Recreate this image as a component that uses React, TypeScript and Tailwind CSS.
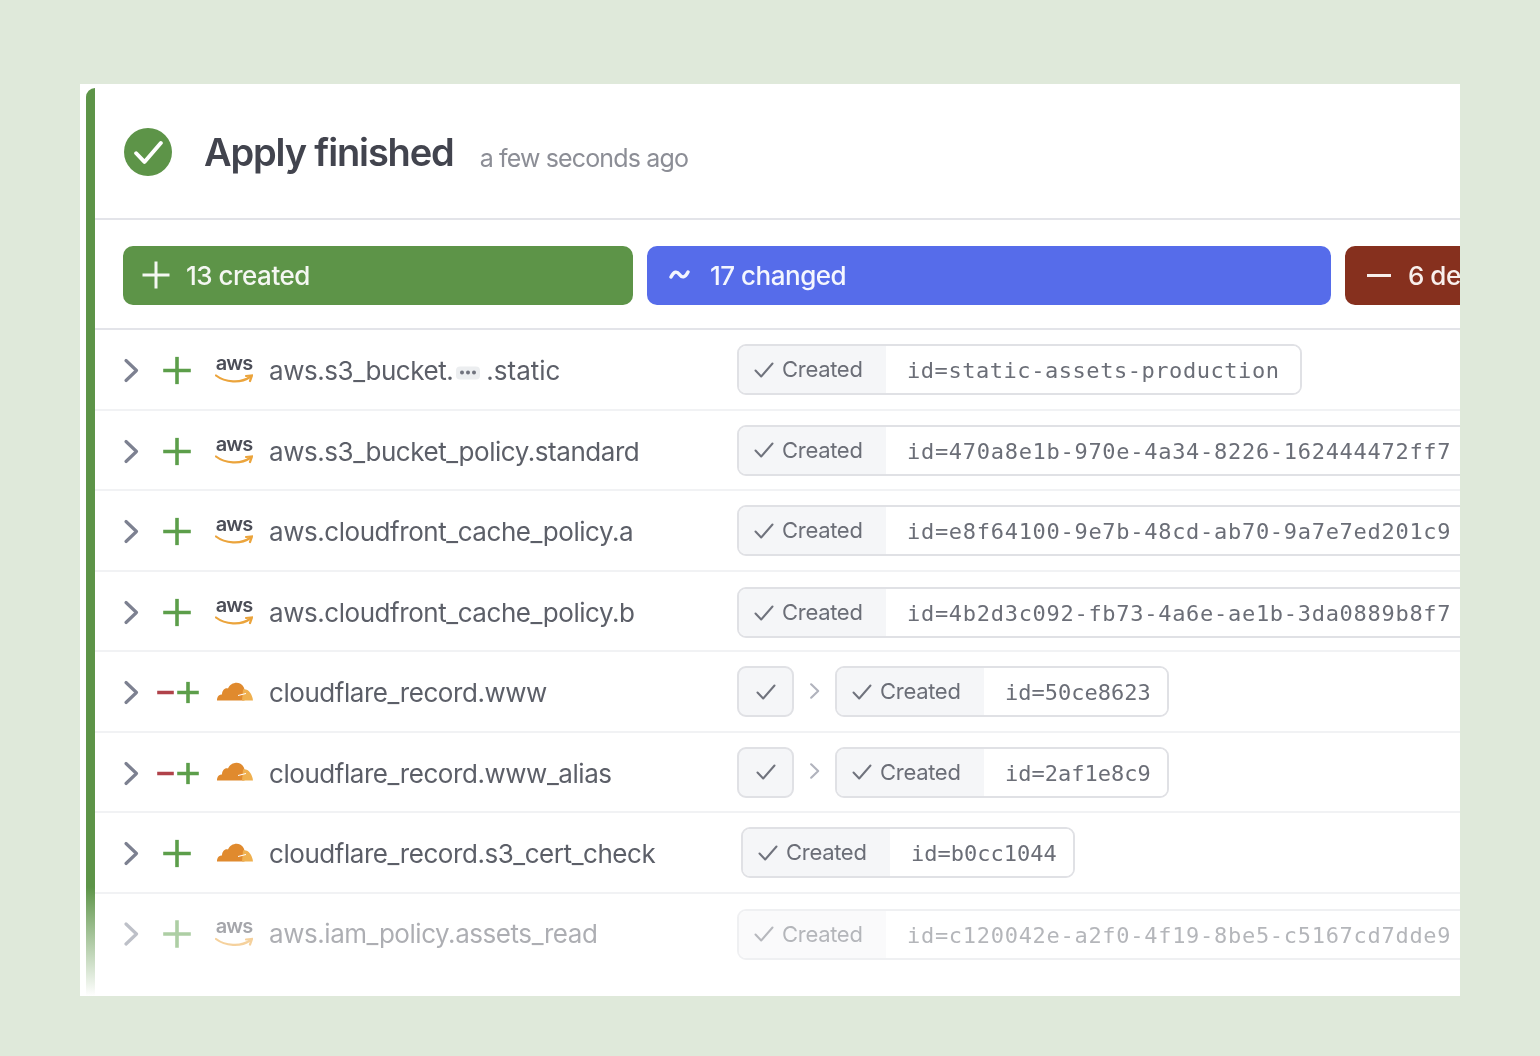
const uiFont = { fontFamily: "Inter, sans-serif" };

function Chevron({ className = "" }: { className?: string }) {
  return (
    <svg width="16" height="24" viewBox="0 0 16 24" fill="none" stroke="#7d8191" strokeWidth="3.2" strokeLinecap="round" strokeLinejoin="round" className={className}>
      <path d="M3 2 L13.5 12 L3 22" />
    </svg>
  );
}

function Plus() {
  return (
    <svg width="28" height="28" viewBox="0 0 28 28" stroke="#5c9e4a" strokeWidth="3.6" strokeLinecap="square">
      <path d="M14 2 V26 M2 14 H26" />
    </svg>
  );
}

function MinusPlus() {
  return (
    <svg width="42" height="22" viewBox="0 0 42 22" strokeWidth="3.6" strokeLinecap="square">
      <path d="M2 11 H15" stroke="#b0424a" />
      <path d="M31 2 V20 M22 11 H40" stroke="#5c9e4a" />
    </svg>
  );
}

function Check({ size = 20, color = "#70737d", weight = 2 }: { size?: number; color?: string; weight?: number }) {
  return (
    <svg width={size} height={size} viewBox="0 0 20 20" fill="none" stroke={color} strokeWidth={weight} strokeLinecap="round" strokeLinejoin="round">
      <path d="M1.5 10.5 L7.2 16.5 L18.5 3.5" />
    </svg>
  );
}

function AwsLogo() {
  return (
    <div className="flex h-[32px] w-[38px] -translate-x-[1px] flex-col items-center">
      <span className="-translate-y-[2px] text-[20px] leading-[20px] font-semibold tracking-[-1px] text-[#4c4e58]" style={uiFont}>
        aws
      </span>
      <svg width="38" height="11" viewBox="0 0 38 11" fill="none" stroke="#eba43c" strokeWidth="2.2" strokeLinecap="round" className="-mt-[1px]">
        <path d="M1 2 C10 9 26 10 35 3.5" />
        <path d="M31 2.5 L37 2 L35 7.5" />
      </svg>
    </div>
  );
}

function CloudflareLogo() {
  return (
    <svg width="38" height="22" viewBox="0 0 38 22" className="mb-[3px]">
      <path d="M1 20 C1 16 3 14 6 14 C6 10 9 7 12 8 C14 3 20 1 24 3 C26 4 28 6 28.5 9 L28.5 20 Z" fill="#e08a2e" />
      <path d="M27 9 C32 8 36 13 37 20 L26 20 Z" fill="#efb04f" />
      <path d="M22 15 L30 13" stroke="#fff" strokeWidth="1" />
    </svg>
  );
}

function Moved() {
  return (
    <>
      <div className="flex h-[51px] w-[57px] flex-none items-center justify-center rounded-[9px] border-2 border-[#e0e1e5] bg-[#f5f6f8]">
        <Check />
      </div>
      <Chevron className="mx-[15px] h-[16px] w-[11px] flex-none -translate-y-[1px] opacity-60" />
    </>
  );
}

type Row = {
  name: React.ReactNode;
  id: string;
  op?: "add" | "replace";
  logo: "aws" | "cf";
  moved?: boolean;
  boxClass?: string;
  idClass: string;
};

const rows: Row[] = [
  {
    name: (
      <>
        aws.s3_bucket.
        <span className="mr-[6px] ml-[3px] inline-flex h-[13px] w-[24px] translate-y-[-5px] items-center justify-center gap-[2px] rounded-[4px] bg-[#eceef0]">
          <i className="size-[4px] rounded-full bg-[#70737d]" />
          <i className="size-[4px] rounded-full bg-[#70737d]" />
          <i className="size-[4px] rounded-full bg-[#70737d]" />
        </span>
        <span className="tracking-[0px]">.static</span>
      </>
    ),
    id: "id=static-assets-production",
    logo: "aws",
    idClass: "pr-[21px] tracking-[0.55px]",
  },
  { name: "aws.s3_bucket_policy.standard", id: "id=470a8e1b-970e-4a34-8226-162444472ff7", logo: "aws", idClass: "pr-[20px] tracking-[0.71px]" },
  { name: "aws.cloudfront_cache_policy.a", id: "id=e8f64100-9e7b-48cd-ab70-9a7e7ed201c9", logo: "aws", idClass: "pr-[20px] tracking-[0.71px]" },
  { name: "aws.cloudfront_cache_policy.b", id: "id=4b2d3c092-fb73-4a6e-ae1b-3da0889b8f7", logo: "aws", boxClass: "mt-[4px]", idClass: "pr-[20px] tracking-[0.71px]" },
  { name: "cloudflare_record.www", id: "id=50ce8623", logo: "cf", op: "replace", moved: true, idClass: "pr-[16px] tracking-[0px]" },
  { name: "cloudflare_record.www_alias", id: "id=2af1e8c9", logo: "cf", op: "replace", moved: true, idClass: "pr-[16px] tracking-[0px]" },
  { name: "cloudflare_record.s3_cert_check", id: "id=b0cc1044", logo: "cf", boxClass: "mt-[1px] ml-[4px]", idClass: "pr-[16px] tracking-[0px]" },
];

function ResultRow({ row, last }: { row: Row; last?: boolean }) {
  return (
    <div className={last ? "flex h-[104px] items-start pt-[14px] opacity-50" : "flex h-[80.5px] flex-none items-center border-b-2 border-[#f1f2f4]"}>
      <div className={last ? "flex h-[52px] w-[642px] flex-none items-center pl-[28px]" : "flex w-[642px] flex-none translate-y-[1.5px] items-center pl-[28px]"}>
        <Chevron />
        <div className={row.op === "replace" ? "ml-[18px] flex w-[59px] flex-none items-center" : "ml-[24px] flex w-[53px] flex-none items-center"}>
          {row.op === "replace" ? <MinusPlus /> : <Plus />}
        </div>
        <div className="flex w-[53px] flex-none items-center">
          {row.logo === "aws" ? <AwsLogo /> : <CloudflareLogo />}
        </div>
        <span className="whitespace-nowrap text-[26px] leading-[36px] tracking-[-0.45px] text-[#5c5f68]" style={uiFont}>
          {row.name}
        </span>
      </div>
      <div className={`flex flex-none items-center ${row.boxClass ?? "mt-[1px]"}`}>
        {row.moved && <Moved />}
        <div className="flex h-[51px] flex-none overflow-hidden rounded-[9px] border-2 border-[#e0e1e5]">
          <div className="flex w-[147px] items-center gap-[8px] bg-[#f5f6f8] pl-[15px]">
            <Check />
            <span className="text-[22px] tracking-[-0.3px] text-[#6b6e77]" style={uiFont}>
              Created
            </span>
          </div>
          <div className={`flex items-center bg-white pl-[21px] ${row.idClass}`}>
            <span className="translate-y-[1px] whitespace-nowrap text-[22px] text-[#6b6e77]" style={{ fontFamily: '"DejaVu Sans Mono", monospace' }}>
              {row.id}
            </span>
          </div>
        </div>
      </div>
    </div>
  );
}

export default function App() {
  return (
    <div className="flex h-[1056px] w-[1540px] bg-[#dfe9da] px-[80px] pt-[84px] pb-[60px]" style={uiFont}>
      <div className="min-w-0 flex-1 overflow-hidden bg-white">
        <div className="flex h-full pl-[6px] blur-[0.6px]">
          <div className="mt-[4px] w-[9px] flex-none rounded-tl-[9px] bg-[linear-gradient(to_bottom,#5d9448_0%,#5d9448_88%,#ffffff_100%)]" />
          <div className="flex min-w-0 flex-1 flex-col overflow-hidden">
            {/* header */}
            <div className="flex h-[136px] flex-none items-center border-b-2 border-[#e3e4e9] pl-[29px]">
              <div className="flex size-[48px] flex-none translate-y-[1px] items-center justify-center rounded-full bg-[#5d9448]">
                <Check size={29} color="#ffffff" weight={2.7} />
              </div>
              <h1 className="mt-[2px] ml-[32px] text-[38px] leading-none font-semibold tracking-[-1.15px] text-[#42444e]">Apply finished</h1>
              <span className="mt-[16px] ml-[26px] text-[25px] tracking-[-0.85px] text-[#8c8e96]">a few seconds ago</span>
            </div>

            {/* summary */}
            <div className="flex h-[110px] flex-none items-center gap-[14px] border-b-2 border-[#e3e4e9] pt-[2px] pl-[28px]">
              <div className="flex h-[59px] w-[510px] flex-none items-center rounded-[10px] bg-[#5d9448] pl-[19px] text-[26px] font-medium tracking-[-0.5px] text-[#f4f7f2]">
                <svg width="28" height="28" viewBox="0 0 28 28" stroke="#f4f7f2" strokeWidth="3" strokeLinecap="square">
                  <path d="M14 2 V26 M2 14 H26" />
                </svg>
                <span className="ml-[16px]">13 created</span>
              </div>
              <div className="flex h-[59px] w-[684px] flex-none items-center rounded-[10px] bg-[#566cea] pl-[22px] text-[26px] font-medium tracking-[-0.5px] text-[#f4f6fe]">
                <svg width="21" height="10" viewBox="0 0 21 10" fill="none" stroke="#f4f6fe" strokeWidth="3.4" strokeLinecap="round">
                  <path d="M2 7 C5 1 8 1 10.5 4.5 C13 8 16 8 19 2" />
                </svg>
                <span className="ml-[20px]">17 changed</span>
              </div>
              <div className="flex h-[59px] w-[300px] flex-none items-center rounded-[10px] bg-[#86301e] pl-[22px] text-[26px] font-medium tracking-[-0.5px] text-[#f8efec]">
                <div className="h-[3px] w-[24px] bg-[#f8efec]" />
                <span className="ml-[17px]">6 deleted</span>
              </div>
            </div>

            {rows.map((row) => (
              <ResultRow key={row.id} row={row} />
            ))}
            <ResultRow
              last
              row={{ name: "aws.iam_policy.assets_read", id: "id=c120042e-a2f0-4f19-8be5-c5167cd7dde9", logo: "aws", idClass: "pr-[20px] tracking-[0.71px]" }}
            />
          </div>
        </div>
      </div>
    </div>
  );
}
